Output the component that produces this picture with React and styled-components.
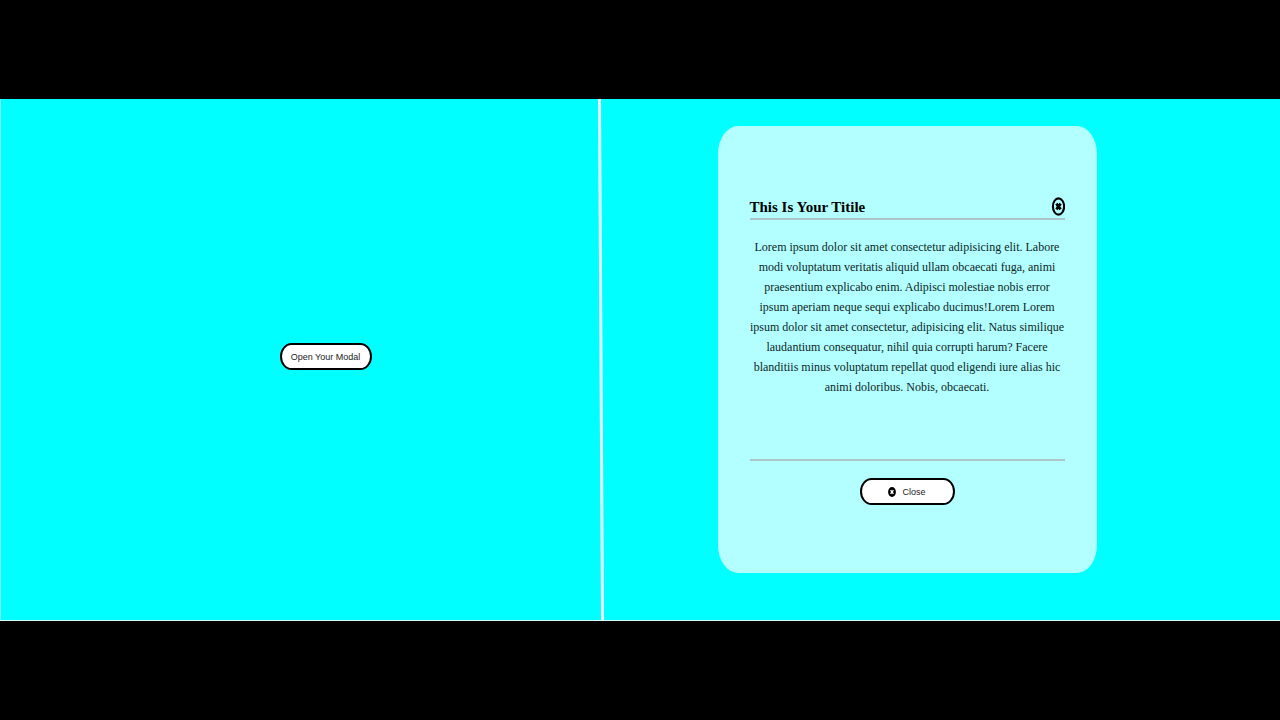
import styled, { createGlobalStyle } from 'styled-components';
import { useState } from 'react';

export default function App() {
  const [isOpen, setIsOpen] = useState(true);

  return (
    <>
      <GlobalStyle />
      <Page>
        <Stage>
          <LeftPanel>
            <PillButton type="button" $width="92px" onClick={() => setIsOpen(true)}>
              Open Your Modal
            </PillButton>
          </LeftPanel>
          <Divider />
          <RightPanel>
            {isOpen && (
              <Modal role="dialog" aria-labelledby="modal-title">
                <ModalHeader>
                  <ModalTitle id="modal-title">This Is Your Titile</ModalTitle>
                  <IconButton type="button" aria-label="close" onClick={() => setIsOpen(false)}>
                    <RingCross />
                  </IconButton>
                </ModalHeader>
                <ModalText>
                  Lorem ipsum dolor sit amet consectetur adipisicing elit. Labore modi voluptatum
                  veritatis aliquid ullam obcaecati fuga, animi praesentium explicabo enim. Adipisci
                  molestiae nobis error ipsum aperiam neque sequi explicabo ducimus!Lorem Lorem
                  ipsum dolor sit amet consectetur, adipisicing elit. Natus similique laudantium
                  consequatur, nihil quia corrupti harum? Facere blanditiis minus voluptatum
                  repellat quod eligendi iure alias hic animi doloribus. Nobis, obcaecati.
                </ModalText>
                <ModalFooter>
                  <PillButton type="button" $width="95px" onClick={() => setIsOpen(false)}>
                    <SolidCross />
                    Close
                  </PillButton>
                </ModalFooter>
              </Modal>
            )}
          </RightPanel>
        </Stage>
      </Page>
    </>
  );
}

function RingCross() {
  return (
    <svg width="14" height="20" viewBox="0 0 14 20" aria-hidden="true">
      <ellipse cx="7.5" cy="10.5" rx="5.6" ry="8.1" fill="none" stroke="#000" strokeWidth="2.1" />
      <path d="M5.4 7.7 L9.6 13.3 M9.6 7.7 L5.4 13.3" stroke="#000" strokeWidth="2.8" />
    </svg>
  );
}

function SolidCross() {
  return (
    <svg width="8" height="10" viewBox="0 0 8 10" aria-hidden="true">
      <ellipse cx="4" cy="5" rx="3.9" ry="4.9" fill="#000" />
      <path d="M2.6 3.1 L5.4 6.9 M5.4 3.1 L2.6 6.9" stroke="#fff" strokeWidth="1.4" />
    </svg>
  );
}

const GlobalStyle = createGlobalStyle`
  * {
    box-sizing: border-box;
  }
  body {
    margin: 0;
    background: #000;
    font-family: 'Liberation Serif', 'Times New Roman', serif;
  }
`;

const Page = styled.main`
  display: flex;
  flex-direction: column;
  justify-content: center;
  min-height: 100vh;
`;

const Stage = styled.div`
  display: grid;
  grid-template-columns: 23fr 6px 26fr;
  background: #00ffff;
  border-bottom: 1px solid #d8ffff;
`;

const LeftPanel = styled.section`
  display: flex;
  align-items: center;
  justify-content: center;
  padding: 0 0 6px 52px;
  border-left: 1px solid #80ffff;
`;

/* the line leans a little to the right on its way down */
const Divider = styled.div`
  background: #e4ffff;
  clip-path: polygon(0 0, 3px 0, 6px 100%, 3px 100%);
`;

const RightPanel = styled.section`
  display: flex;
  justify-content: center;
  min-height: 521px;
  padding: 27px 70px 47px 0;
`;

const Modal = styled.div`
  display: flex;
  flex-direction: column;
  width: 379px;
  padding: 68px 32px;
  border-radius: 20px / 28px;
  background: #b3ffff;
`;

const ModalHeader = styled.header`
  display: flex;
  align-items: flex-end;
  justify-content: space-between;
  height: 26px;
  border-bottom: 2px solid #acc6cc;
`;

const ModalTitle = styled.h1`
  margin: 0;
  font-size: 15px;
  line-height: 22px;
`;

const IconButton = styled.button`
  display: flex;
  padding: 0 0 2px;
  border: none;
  background: none;
  cursor: pointer;
`;

const ModalText = styled.p`
  margin: 17px 0 0;
  color: #0c2626;
  font-size: 12px;
  line-height: 20px;
  text-align: center;
`;

const ModalFooter = styled.footer`
  display: flex;
  justify-content: center;
  margin-top: auto;
  padding-top: 17px;
  border-top: 2px solid #acc6cc;
`;

const PillButton = styled.button`
  display: flex;
  align-items: center;
  justify-content: center;
  gap: 6px;
  width: ${({ $width }) => $width};
  height: 27px;
  padding: 0;
  border: 2px solid #000;
  border-radius: 12px / 14px;
  background: #fff;
  color: #222;
  font-family: 'Liberation Sans', Arial, sans-serif;
  font-size: 9px;
  white-space: nowrap;
  cursor: pointer;
`;
